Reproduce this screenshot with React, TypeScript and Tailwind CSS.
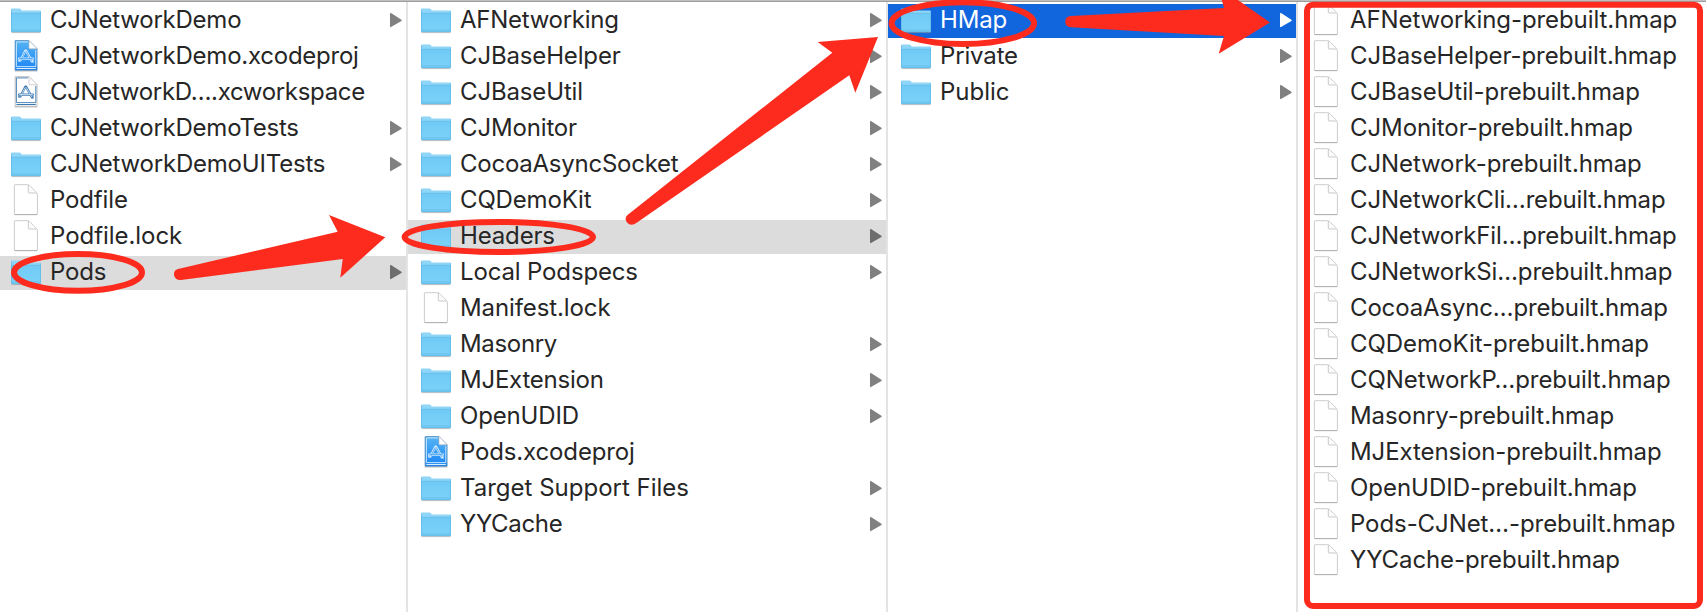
import React from "react";

type Kind = "folder" | "file" | "project" | "workspace";
type Item = { name: string; kind: Kind; state?: "path" | "active"; tracking?: string };

const tight = "tracking-[-0.24px]";
const tighter = "tracking-[-0.33px]";
const snug = "tracking-[-0.15px]";
const slight = "tracking-[-0.08px]";

const folder = (name: string, tracking = slight, state?: Item["state"]): Item => ({ name, kind: "folder", state, tracking });
const file = (name: string, tracking = slight): Item => ({ name, kind: "file", tracking });

const root: Item[] = [
  folder("CJNetworkDemo", tight),
  { name: "CJNetworkDemo.xcodeproj", kind: "project", tracking: tight },
  { name: "CJNetworkD….xcworkspace", kind: "workspace", tracking: tighter },
  folder("CJNetworkDemoTests", tight),
  folder("CJNetworkDemoUITests", "tracking-[-0.2px]"),
  file("Podfile", snug),
  file("Podfile.lock", "tracking-[-0.05px]"),
  folder("Pods", snug, "path"),
];

const pods: Item[] = [
  folder("AFNetworking", "tracking-[-0.27px]"),
  folder("CJBaseHelper", snug),
  folder("CJBaseUtil", snug),
  folder("CJMonitor", snug),
  folder("CocoaAsyncSocket", tight),
  folder("CQDemoKit", snug),
  folder("Headers", snug, "path"),
  folder("Local Podspecs", snug),
  file("Manifest.lock", "tracking-[-0.1px]"),
  folder("Masonry", tighter),
  folder("MJExtension", tight),
  folder("OpenUDID", snug),
  { name: "Pods.xcodeproj", kind: "project", tracking: snug },
  folder("Target Support Files", "tracking-normal"),
  folder("YYCache", tighter),
];

const headers: Item[] = [folder("HMap", snug, "active"), folder("Private", snug), folder("Public", "tracking-normal")];

const hmaps: Item[] = [
  file("AFNetworking-prebuilt.hmap"),
  file("CJBaseHelper-prebuilt.hmap"),
  file("CJBaseUtil-prebuilt.hmap"),
  file("CJMonitor-prebuilt.hmap"),
  file("CJNetwork-prebuilt.hmap", "tracking-[-0.1px]"),
  file("CJNetworkCli…rebuilt.hmap", snug),
  file("CJNetworkFil…prebuilt.hmap", snug),
  file("CJNetworkSi…prebuilt.hmap", snug),
  file("CocoaAsync…prebuilt.hmap", snug),
  file("CQDemoKit-prebuilt.hmap", "tracking-[-0.03px]"),
  file("CQNetworkP…prebuilt.hmap"),
  file("Masonry-prebuilt.hmap"),
  file("MJExtension-prebuilt.hmap"),
  file("OpenUDID-prebuilt.hmap", "tracking-[-0.03px]"),
  file("Pods-CJNet…-prebuilt.hmap"),
  file("YYCache-prebuilt.hmap", "tracking-[-0.1px]"),
];

function FolderIcon() {
  return (
    <svg width="30" height="34" viewBox="0 0 30 34" className="shrink-0">
      <path d="M0.5 28.4H29.5" stroke="#8f9ba2" strokeOpacity="0.6" strokeWidth="1.4" />
      <path d="M0 12V5.6Q0 4.4 1.2 4.4H8.4Q9.2 4.4 9.8 5.2L10.8 6.4H28.8Q30 6.4 30 7.6V12Z" fill="#8ed5f8" />
      <path d="M0 9H30V27Q30 28 29 28H1Q0 28 0 27Z" fill="url(#folderFill)" />
      <path d="M0 9.3H30" stroke="#68bde8" strokeWidth="0.8" />
      <path d="M0.5 26H29.5" stroke="#62b9e6" strokeWidth="0.8" />
      <path d="M0.4 5.5V27.6H29.6V7.5" fill="none" stroke="#5db4e0" strokeOpacity="0.8" strokeWidth="0.8" />
    </svg>
  );
}

function FileIcon() {
  return (
    <svg width="30" height="34" viewBox="0 0 30 34" className="shrink-0">
      <path d="M4 0.7H16.5Q18 0.7 19 1.8L25.6 8.6Q26.4 9.5 26.4 11V30Q26.4 30.6 25.8 30.6H4Q3.4 30.6 3.4 30V1.3Q3.4 0.7 4 0.7Z" fill="#fff" stroke="#c6c6c6" strokeWidth="0.9" />
      <path d="M3.6 30.6H26.2" stroke="#b0b0b0" strokeWidth="1" />
      <path d="M17.3 1V8.2Q17.3 9 18.1 9H25.5" fill="#fbfbfb" stroke="#c4c4c4" strokeWidth="0.9" />
    </svg>
  );
}

function XcodeIcon({ filled }: { filled: boolean }) {
  const line = filled ? "#d8edff" : "#3a78b2";
  return (
    <svg width="30" height="34" viewBox="0 0 30 34" className="shrink-0">
      <path d="M4.2 0.7H18L26 8.8V30.2H4.2Z" fill={filled ? "url(#projectFill)" : "#fff"} stroke={filled ? "#3d83bd" : "#b9b9b9"} strokeWidth="0.9" />
      <path d="M3.6 31H26.6" stroke="#9a9a9a" strokeOpacity="0.7" strokeWidth="0.9" />
      <path d="M17 1.9H5.4V26.6H24.8V10" fill="none" stroke={line} strokeWidth="0.9" />
      <path d="M5.4 28.5H24.8" stroke={line} strokeWidth="1" />
      <path d="M18 0.5V7.8Q18 8.8 19 8.8H26.2Z" fill="#fff" stroke="#bcbcbc" strokeWidth="0.7" />
      <g fill="none" stroke={line} strokeLinecap="round">
        <path d="M14.4 10.6L9.4 20.6M15 10.6L21 21.4" strokeWidth="2.2" />
        <path d="M8 18.6H22" strokeWidth="2.2" />
      </g>
      <g fill="none" stroke={filled ? "#48a4f5" : "#d4e3f1"} strokeWidth="0.9">
        <path d="M14.2 11.4L9.6 20.4M15.2 11.4L20.8 21M8 18.6H22" />
      </g>
      <path d="M7.4 19.4L7.8 21.6L9.4 20.4M20.4 21.2L22.2 22.4L22 19.8" fill="none" stroke={line} strokeWidth="0.9" />
    </svg>
  );
}

function Icon({ kind }: { kind: Kind }) {
  if (kind === "folder") return <FolderIcon />;
  if (kind === "file") return <FileIcon />;
  return <XcodeIcon filled={kind === "project"} />;
}

function Row({ item }: { item: Item }) {
  const bg = item.state === "active" ? "bg-[#1166de] text-white" : item.state === "path" ? "bg-[#dcdcdc] text-[#262626]" : "text-[#262626]";
  const arrow = item.state === "active" ? "#ffffff" : item.state === "path" ? "#6d6d6d" : "#808080";
  return (
    <li className={`flex h-[34px] items-center pl-[13px] pr-[3px] ${bg}`}>
      <Icon kind={item.kind} />
      <span className={`ml-[9px] grow whitespace-pre pb-[2px] text-[24px] leading-[32px] ${item.tracking}`}>{item.name}</span>
      {item.kind === "folder" && (
        <svg width="14" height="34" viewBox="0 0 14 34" className="shrink-0">
          <path d="M1 9.6V22.4Q1 23.4 2 22.9L12.4 17.1Q13.2 16.4 12.4 15.7L2 9.1Q1 8.6 1 9.6Z" fill={arrow} />
        </svg>
      )}
    </li>
  );
}

function Column({ items, className }: { items: Item[]; className: string }) {
  return (
    <ul className={`flex h-full shrink-0 flex-col gap-[2px] pt-[2px] ${className}`}>
      {items.map((item) => (
        <Row key={item.name} item={item} />
      ))}
    </ul>
  );
}

function Annotations() {
  return (
    <svg width="1706" height="612" viewBox="0 0 1706 612" className="pointer-events-none absolute left-0 top-0">
      <defs>
        <linearGradient id="folderFill" x1="0" y1="0" x2="0" y2="1">
          <stop offset="0" stopColor="#6fcaf5" />
          <stop offset="1" stopColor="#7bd2f9" />
        </linearGradient>
        <linearGradient id="projectFill" x1="0" y1="0" x2="0" y2="1">
          <stop offset="0" stopColor="#55b4f3" />
          <stop offset="1" stopColor="#1b85f6" />
        </linearGradient>
      </defs>
      <g fill="none" stroke="#fd2b1e" strokeWidth="6">
        <ellipse cx="78" cy="272.4" rx="64" ry="18.4" />
        <ellipse cx="498.8" cy="237" rx="94.2" ry="15" />
        <ellipse cx="962.8" cy="23.2" rx="71.2" ry="20.9" />
        <rect x="1307" y="4.7" width="393" height="601.3" rx="6" />
      </g>
      <g fill="#fd2b1e">
        <path d="M178 269L337.7 231.7L329 215L385.3 237.3L340.3 277.7L342.7 259L181 280Q175 280.4 174 275Q173.6 270 178 269Z" />
        <path d="M627.5 215L832.3 52.7L817.7 42L878 37L855.3 92.7L849.3 75.3L637 222.5Q631 227 627 222.5Q624 218 627.5 215Z" />
        <path d="M1071 16L1224 8L1218 -14L1270 22.5L1218.7 53.7L1224 36L1071 27.3Q1065.3 27 1065.3 21.6Q1065.3 16.4 1071 16Z" />
      </g>
    </svg>
  );
}

export default function App() {
  return (
    <div className="relative flex h-[612px] w-[1706px] flex-col overflow-hidden bg-white font-['Inter',sans-serif]">
      <div className="h-[2px] shrink-0 border-b border-[#9f9f9f] bg-[#bfbfbf]" />
      <div className="flex grow">
        <Column items={root} className="w-[408px] border-r-2 border-[#e4e4e4] [&>li]:pl-[11px]" />
        <Column items={pods} className="w-[480px] border-r-2 border-[#e4e4e4]" />
        <Column items={headers} className="w-[410px] border-r-2 border-[#e4e4e4]" />
        <Column items={hmaps} className="w-[408px]" />
      </div>
      <Annotations />
    </div>
  );
}
